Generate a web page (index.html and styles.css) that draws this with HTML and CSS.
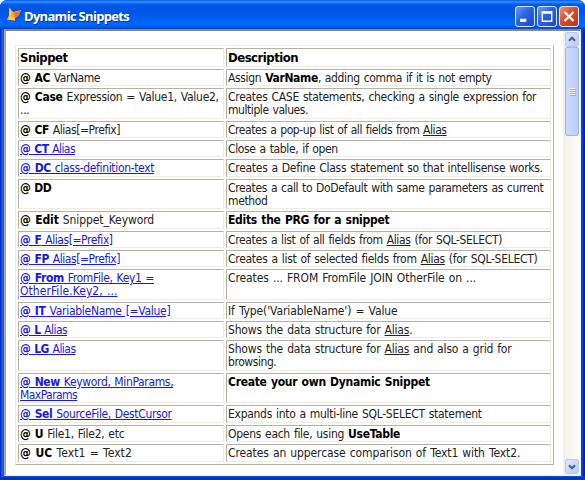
FILE: index.html
```html
<!DOCTYPE html>
<html lang="en">
<head>
<meta charset="utf-8">
<title>Dynamic Snippets</title>
<link rel="stylesheet" href="styles.css">
</head>
<body>
<div class="window">
  <header class="titlebar">
    <svg class="fox" viewBox="0 0 15 16" width="15" height="16"><path d="M2 0 6 5 14 3 12 8 8 11 8 14 4 13 0 13 2 8Z" fill="#f9aa20"/><path d="M2 1 5 6 3 10Z" fill="#ffdc46"/><path d="m7 6 7-3-3 6-3 2Z" fill="#f4702a"/><path d="m1 12 3-3 4 3-2 1Z" fill="#ffd63a"/></svg>
    <h1>Dynamic Snippets</h1>
    <div class="controls">
      <button class="ctl" aria-label="Minimize"><svg viewBox="0 0 20 20"><path d="M4.5 12.500h7v3.500h-7z" fill="#fff"/></svg></button>
      <button class="ctl" aria-label="Maximize"><svg viewBox="0 0 20 20"><path d="M4 4h12v12H4zM5.500 7v7.500h9V7z" fill="#fff" fill-rule="evenodd"/></svg></button>
      <button class="ctl close" aria-label="Close"><svg viewBox="0 0 20 20"><path d="m5 5 10 10M15 5 5 15" stroke="#fff" stroke-width="2.4"/></svg></button>
    </div>
  </header>
  <main class="client">
    <div class="page">
      <div class="table">
        <div class="head">Snippet</div><div class="head">Description</div>
        <div class="n1"><b>@ AC</b> VarName</div><div>Assign <b>VarName</b>, adding comma if it is not empty</div>
        <div class="w1"><b>@ Case</b> Expression = Value1, Value2,<br>...</div><div class="w1">Creates CASE statements, checking a single expression for<br><span class="n1">multiple values.</span></div>
        <div class="n1"><b>@ CF</b> Alias[=Prefix]</div><div class="n1">Creates a pop-up list of all fields from <u>Alias</u></div>
        <div class="n2"><a><b>@ CT</b> Alias</a></div><div>Close a table, if open</div>
        <div><a><b>@ DC</b> class-definition-text</a></div><div class="w1">Creates a Define Class statement so that intellisense works.</div>
        <div class="n2"><b>@ DD</b></div><div>Creates a call to DoDefault with same parameters as current<br>method</div>
        <div class="w3"><b>@ Edit</b> Snippet_Keyword</div><div class="w1"><b>Edits the PRG for a snippet</b></div>
        <div class="n1"><a><b>@ F</b> Alias[=Prefix]</a></div><div>Creates a list of all fields from <u>Alias</u> (for SQL-SELECT)</div>
        <div class="n1"><a><b>@ FP</b> Alias[=Prefix]</a></div><div class="w1">Creates a list of selected fields from <u>Alias</u> (for SQL-SELECT)</div>
        <div><a><b>@ From</b> FromFile, Key1 =<br><span class="w4">OtherFile.Key2, ...</span></a></div><div class="w3">Creates ... FROM FromFile JOIN OtherFile on ...</div>
        <div class="w1"><a><b>@ IT</b> VariableName [=Value]</a></div><div class="w3">If Type('VariableName') = Value</div>
        <div class="n2"><a><b>@ L</b> Alias</a></div><div class="w2">Shows the data structure for <u>Alias</u>.</div>
        <div class="n2"><a><b>@ LG</b> Alias</a></div><div class="w2">Shows the data structure for <u>Alias</u> and also a grid for<br><span class="n1">browsing.</span></div>
        <div><a><b>@ New</b> Keyword, MinParams,<br><span class="n2">MaxParams</span></a></div><div class="w1"><b>Create your own Dynamic Snippet</b></div>
        <div><a><b>@ Sel</b> SourceFile, DestCursor</a></div><div class="w1">Expands into a multi-line SQL-SELECT statement</div>
        <div class="w1"><b>@ U</b> File1, File2, etc</div><div class="w1">Opens each file, using <b>UseTable</b></div>
        <div class="w4"><b>@ UC</b> Text1 = Text2</div><div class="w3">Creates an uppercase comparison of Text1 with Text2.</div>
      </div>
    </div>
    <div class="scroll">
      <div class="arrow"><svg viewBox="0 0 14 14"><path d="m3.500 8.500 3.500-3.500 3.500 3.500" fill="none" stroke="#4d6185" stroke-width="2.6"/></svg></div>
      <div class="thumb"><i></i><i></i><i></i><i></i></div>
      <div class="arrow down"><svg viewBox="0 0 14 14"><path d="m3.500 5.500 3.500 3.500 3.500-3.500" fill="none" stroke="#4d6185" stroke-width="2.6"/></svg></div>
    </div>
  </main>
</div>
</body>
</html>
```
FILE: styles.css
```css
*{box-sizing:border-box}
body{margin:0;width:585px;height:480px;overflow:hidden;background:#fff;font-family:"DejaVu Sans Condensed","DejaVu Sans",sans-serif;font-stretch:condensed}
.window{width:585px;height:480px;display:flex;flex-direction:column;padding:0 4px 4px;border-radius:7px 7px 0 0;background:linear-gradient(90deg,#0019cf 0,#0831d9 1px,#166aee 2px,#0855dd 4px,#0855dd 581px,#0148e0 582px,#001ea0 584px);box-shadow:inset 0 -3px #0133bd,inset 0 -1px #00138c}
.titlebar{height:29px;margin:0 -4px;padding:0 6px 0 7px;flex:none;display:flex;align-items:center;border-radius:7px 7px 0 0;background:linear-gradient(#0058e6 0,#3a93ff 2px,#1272f3 3px,#0058e8 5px,#0054e3 9px,#0056e6 14px,#0062f8 20px,#0066ff 25px,#0058e4 27px,#0144c8 29px)}
.fox{margin-top:1px}
h1{margin:4px 0 0 2px;font-family:"Open Sans","Noto Sans",sans-serif;font-stretch:normal;font-size:13px;line-height:17px;color:#fff;letter-spacing:-.7px;text-shadow:1px 1px #0a3596}
.controls{margin:3px 0 0 auto;display:flex;gap:2px}
.ctl{width:20px;height:21px;padding:0;border:1px solid #dce7ff;border-radius:3px;background:linear-gradient(135deg,#6d9cf6,#2a62e2 45%,#1a49ca)}
.ctl svg{display:block;width:18px;height:19px}
.close{background:linear-gradient(135deg,#ed9475,#dc4b26 45%,#bd3312)}
.client{flex:1;display:flex;background:#fff;border-top:2px solid #8a8674;border-left:2px solid #aca899;border-right:1px solid #f1efe2;border-bottom:1px solid #f1efe2}
.page{flex:1;padding:14px 0 0 9px}
.table{width:539px;height:420px;padding:2px;display:grid;grid-template-columns:206px 325px;gap:2px;grid-template-rows:19px 17px 31px 17px 17px 18px 30px 18px 17px 17px 31px 17px 17px 31px 30px 18px 17px 18px;border:1px solid;border-color:#f0eee1 #b5b2a4 #b5b2a4 #f0eee1}
.table>div{border:1px solid;border-color:#b5b2a4 #f0eee1 #f0eee1 #b5b2a4;padding:2px 0 0 1px;font-size:12px;line-height:13px;white-space:nowrap;color:#222;letter-spacing:-.35px;word-spacing:.8px}
.table b{color:#000}
.table .head{font-size:13px;line-height:17px;padding-top:0;font-weight:bold;color:#000;letter-spacing:-.5px}
.table .n2{letter-spacing:-.55px}
.table .n1{letter-spacing:-.43px}
.table .w1{letter-spacing:-.28px}
.table .w2{letter-spacing:-.18px}
.table .w3{letter-spacing:-.1px}
.table .w4{letter-spacing:.06px}
.table a,.table a b{color:#1717ee}
a{text-decoration:underline}
.scroll{width:17px;flex:none;display:flex;flex-direction:column;align-items:center;background:linear-gradient(90deg,#f1f0e7,#fefefb);padding:1px 1px 1px}
.arrow{width:14px;height:15px;flex:none;border-radius:2px;border:1px solid #b5c8f5;background:linear-gradient(135deg,#dce6ff,#b9ccfa)}
.arrow svg{display:block;width:12px;height:13px}
.thumb{width:14px;height:89px;border:1px solid #a0b5e8;border-radius:2px;background:linear-gradient(90deg,#cbdafe,#bacdfb);display:flex;flex-direction:column;align-items:center;justify-content:center;gap:1px}
.thumb i{width:6px;height:1px;background:#eef4ff;box-shadow:1px 1px #8caeea}
.down{margin-top:auto}
```
